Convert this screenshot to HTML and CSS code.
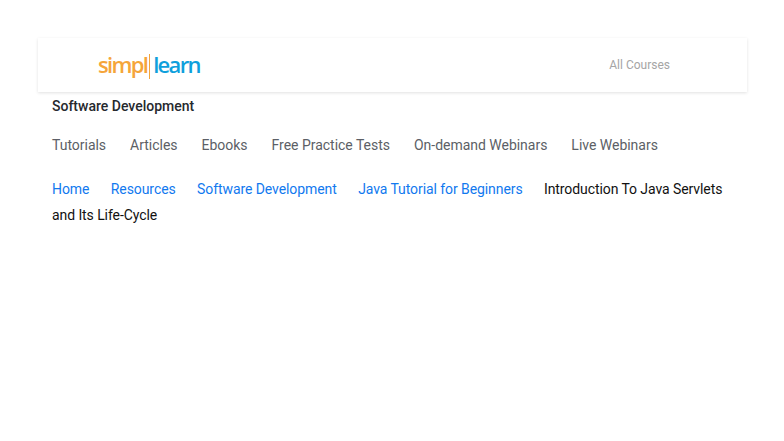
FILE: index.html
```html
<!DOCTYPE html>
<html lang="en">
<head>
    <meta charset="UTF-8">
    <meta name="viewport" content="width=device-width, initial-scale=1.0">
    <title>Introduction To Java Servlets and Its Life-Cycle</title>
    <link rel="stylesheet" href="styles.css">
</head>
<body>
    <!-- Top header -->
    <header class="site-header">
        <a class="logo" href="#"><span class="logo-simpl">simpl</span><span class="logo-bar"></span><span class="logo-learn">learn</span></a>
        <a class="all-courses" href="#">All Courses</a>
    </header>

    <div class="content">
        <h2 class="section-title">Software Development</h2>

        <nav class="tabs">
            <a href="#">Tutorials</a>
            <a href="#">Articles</a>
            <a href="#">Ebooks</a>
            <a href="#">Free Practice Tests</a>
            <a href="#">On-demand Webinars</a>
            <a href="#">Live Webinars</a>
        </nav>

        <!-- Breadcrumb -->
        <div class="breadcrumb">
            <a href="#">Home</a>
            <a href="#">Resources</a>
            <a href="#">Software Development</a>
            <a href="#">Java Tutorial for Beginners</a>
            <span>Introduction To Java Servlets</span>
            <span>and Its Life-Cycle</span>
        </div>
    </div>
</body>
</html>
```

FILE: styles.css
```css
/* Reset */
* {
    margin: 0;
    padding: 0;
    box-sizing: border-box;
}

html, body {
    height: 100%;
    font-family: 'Roboto', sans-serif;
    background-color: #fff;
    overflow: hidden;
}

a {
    text-decoration: none;
}

/* Header */
.site-header {
    height: 54px;
    margin: 38px 37px 0 38px;
    padding: 0 77px 0 60px;
    display: flex;
    justify-content: space-between;
    align-items: flex-start;
    box-shadow: 0 1px 3px rgba(0, 0, 0, 0.12);
}

.logo {
    display: flex;
    align-items: flex-start;
    font-family: 'Open Sans', sans-serif;
    font-size: 22px;
    font-weight: 600;
    line-height: 28px;
    letter-spacing: -1.7px;
    margin-top: 12px;
}

.logo-simpl {
    color: #f5a53a;
}

.logo-learn {
    color: #0f9fdc;
}

.logo-bar {
    width: 1px;
    height: 25px;
    margin: 4px 3px 0 2px;
    background-color: #f5a53a;
}

.all-courses {
    margin-top: 20px;
    font-size: 12px;
    line-height: 14px;
    color: #a5a5a5;
}

/* Main content */
.content {
    padding: 0 52px;
}

.section-title {
    margin-top: 6px;
    font-size: 14px;
    line-height: 17px;
    font-weight: 500;
    color: #26292e;
}

.tabs {
    display: flex;
    gap: 24px;
    margin-top: 22px;
    font-size: 14px;
    line-height: 17px;
    letter-spacing: -0.02px;
}

.tabs a {
    color: #5c5f66;
}

.breadcrumb {
    margin-top: 22px;
    font-size: 14px;
    line-height: 26px;
    letter-spacing: -0.08px;
    color: #111;
}

.breadcrumb a {
    color: #1179ef;
    margin-right: 18px;
}
```
